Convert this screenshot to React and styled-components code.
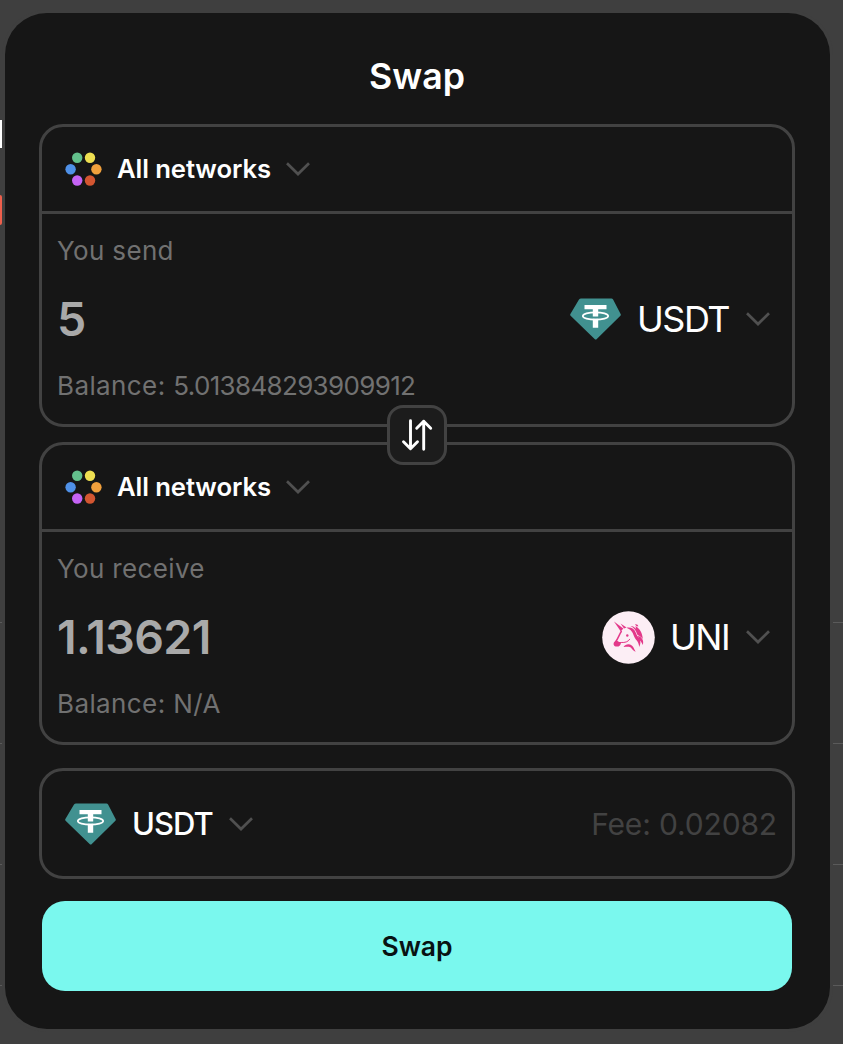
import React from "react";
import styled, { createGlobalStyle } from "styled-components";

const Global = createGlobalStyle`
  * { box-sizing: border-box; }
  body { margin: 0; background: #3f3f3f; }
`;

const Page = styled.div`
  position: relative;
  width: 843px;
  height: 1044px;
  padding: 13px 13px 15px 5px;
  overflow: hidden;
  background: #3f3f3f;
  font-family: Inter, "Liberation Sans", sans-serif;
`;

const Rule = styled.div`
  position: absolute;
  left: 0;
  right: 0;
  top: ${(p) => p.$top}px;
  height: 1px;
  background: #5a5a5a;
`;

const Peek = styled.div`
  position: absolute;
  left: 0;
  top: ${(p) => p.$top}px;
  width: 2px;
  height: ${(p) => p.$height}px;
  background: ${(p) => p.$color};
  border-radius: 0 ${(p) => p.$radius || 0}px ${(p) => p.$radius || 0}px 0;
`;

const Dialog = styled.main`
  position: relative;
  display: flex;
  flex-direction: column;
  width: 825px;
  height: 1016px;
  padding: 0 35px 0 34px;
  border-radius: 42px;
  background: #161616;
  box-shadow: 0 0 0 3px #3f3f3f;
`;

const Text = styled.span`
  display: block;
  white-space: nowrap;
  color: ${(p) => p.$color || "#fff"};
  font-size: ${(p) => p.$size}px;
  font-weight: ${(p) => p.$weight || 400};
  letter-spacing: ${(p) => p.$spacing || 0}px;
  line-height: ${(p) => p.$line}px;
`;

const BalanceValue = styled.span`
  letter-spacing: ${(p) => p.$spacing}px;
`;

const Header = styled.header`
  display: flex;
  justify-content: center;
  height: 111px;
  padding-top: 43px;
`;

const Panel = styled.section`
  height: 303px;
  border: 3px solid #424242;
  border-radius: 24px;
`;

const NetworkBar = styled.div`
  display: flex;
  align-items: center;
  height: 87px;
  padding-left: 23px;
  border-bottom: 3px solid #424242;
`;

const NetworkName = styled.div`
  width: 154px;
  margin: 0 15px;
`;

const PanelBody = styled.div`
  display: flex;
  flex-direction: column;
  padding: 20px 22px 0 15px;
`;

const AmountRow = styled.div`
  display: flex;
  align-items: center;
  justify-content: space-between;
  height: 70px;
  margin: 16px 0 15px;
`;

const Token = styled.div`
  display: flex;
  align-items: center;
`;

const TokenName = styled.div`
  width: ${(p) => p.$width}px;
  margin: 0 17px 0 ${(p) => p.$gap || 16}px;
`;

const Junction = styled.div`
  position: relative;
  display: flex;
  justify-content: center;
  height: 15px;
`;

const FlipButton = styled.button`
  position: absolute;
  top: -22px;
  display: flex;
  align-items: center;
  justify-content: center;
  width: 60px;
  height: 60px;
  padding: 0;
  border: 3px solid #424242;
  border-radius: 16px;
  background: #1c1c1c;
`;

const FeeRow = styled.section`
  display: flex;
  align-items: center;
  justify-content: space-between;
  height: 111px;
  margin-top: 23px;
  padding: 0 15px 0 23px;
  border: 3px solid #424242;
  border-radius: 24px;
`;

const SwapButton = styled.button`
  display: flex;
  align-items: center;
  justify-content: center;
  height: 90px;
  margin: 22px 3px 0;
  padding: 0;
  border: 0;
  border-radius: 23px;
  background: #7af8ee;
  font-family: inherit;
`;

const Icon = styled.svg`
  display: block;
  flex: none;
`;

function Chevron() {
  return (
    <Icon width="24" height="16" viewBox="0 0 24 16" fill="none">
      <path d="M1 2.300 12 13 23 2.300" stroke="#505050" strokeWidth="2.7" />
    </Icon>
  );
}

function NetworksIcon() {
  return (
    <Icon width="37" height="34" viewBox="0 0 37 34">
      <circle cx="12.2" cy="5.8" r="5.2" fill="#63c08c" />
      <circle cx="25" cy="5.8" r="5.2" fill="#eedf51" />
      <circle cx="31.4" cy="17.2" r="5.2" fill="#f1a03c" />
      <circle cx="25" cy="28.5" r="5.2" fill="#d35631" />
      <circle cx="12.2" cy="28.5" r="5.2" fill="#c563f5" />
      <circle cx="5.6" cy="17.2" r="5.2" fill="#4f91e8" />
    </Icon>
  );
}

function TetherIcon() {
  return (
    <Icon width="51" height="42" viewBox="0 0 51 42">
      <path d="M11 .5h30.500q1 0 1.600 .9L50.600 16q.6 1-.2 1.800L26.800 41q-1.100 1-2.200 0L.6 17.800q-.8-.8-.2-1.800L9 1.400Q9.800.5 11 .5Z" fill="#419190" />
      <path d="M14.500 7h22v4.200h-8.300v7.300h-5.400v-7.300h-8.300zM22.800 20.700h5.400v9h-5.400z" fill="#fff" />
      <ellipse cx="25.500" cy="18" rx="12.700" ry="3.700" fill="none" stroke="#fff" strokeWidth="1.700" />
    </Icon>
  );
}

function UniIcon() {
  return (
    <Icon width="53" height="53" viewBox="0 0 53 53">
      <circle cx="26.500" cy="26.500" r="26.300" fill="#fceef5" />
      <g fill="#e3398a">
        <path d="M12 10.500 21.300 17.500 18.800 20.500Z" />
        <path d="M18.500 12.500 24.500 16.500 22 17.500Z" />
        <path d="M12.200 31c1.400-1.600 3-1.500 4.500-.3.700.5 1.500.5 2.400.2 0 3-2 4.800-4.400 4.700-2.800-.1-3.900-2.400-2.500-4.600Z" />
        <path d="M24.500 16.800c4.500-.8 8 1 9.300 5 .8 2.500 2.400 4 3.600 6 1.400 2.400 1.300 5.200-.2 8.200-.3-4.500-2.200-6-4-8.500-1.500-2.200-1.700-5-3.700-7.300-1.300-1.500-2.900-2.600-5-3.400Z" />
        <path d="M28.500 15c2.500.2 4 1.200 5.500 2.700l-.5-2.700c4 2.300 7 7 7.300 13-1.700-2.200-3.500-3.200-5.600-4.500-1.200-4-3-6.500-6.700-8.500Z" />
        <path d="M33 13.300c1.800-.3 3 .3 3.300 2.100l-2-.4Z" />
        <path d="M36 24.500c4.500 2.300 6 5.200 4.800 9.500-1-2.500-2.400-4-4-5.700Z" />
        <path d="M21.500 36c2-3 5.500-3.700 8.300-1.600 2 1.500 2.300 3.600 3.900 6.400-2.500-.6-3.200-2.500-4.700-4-1.700-1.600-4-.8-7.500-.8Z" />
        <circle cx="25.300" cy="24.500" r="1.200" />
      </g>
      <g fill="none" stroke="#e3398a" strokeLinecap="round">
        <path d="M19.300 20.500c-1.800 2.500-3.200 7-5.500 10" strokeWidth="1.500" />
        <path d="M19.500 31.500c3.500.2 6.500-.5 8.200-3.200" strokeWidth="1" />
      </g>
    </Icon>
  );
}

function FlipIcon() {
  return (
    <Icon width="32" height="32" viewBox="0 0 32 32" fill="none">
      <path
        d="M9.500 1.800v28M2.500 22.800l7 7 7-7M22.700 30.200v-28M15.700 9.200l7-7 7 7"
        stroke="#fff"
        strokeWidth="2.900"
        strokeLinecap="round"
        strokeLinejoin="round"
      />
    </Icon>
  );
}

function AssetPanel({ label, amount, balance, token }) {
  return (
    <Panel>
      <NetworkBar>
        <NetworksIcon />
        <NetworkName>
          <Text $size={25.7} $weight={600} $line={36} $spacing={-0.1}>All networks</Text>
        </NetworkName>
        <Chevron />
      </NetworkBar>
      <PanelBody>
        <Text $size={26} $line={34} $color="#717171" $spacing={0.35}>{label}</Text>
        <AmountRow>
          <Text $size={46.5} $weight={600} $line={60} $color="#a9a9a9" $spacing={-0.6}>{amount}</Text>
          {token}
        </AmountRow>
        <Text $size={26} $line={34} $color="#717171" $spacing={0.4}>
          Balance: <BalanceValue $spacing={balance.spacing}>{balance.text}</BalanceValue>
        </Text>
      </PanelBody>
    </Panel>
  );
}

export default function App() {
  return (
    <>
      <Global />
      <Page>
        <Rule $top={622} />
        <Rule $top={743} />
        <Rule $top={864} />
        <Rule $top={985} />
        <Peek $top={120} $height={28} $color="#fff" />
        <Peek $top={195} $height={30} $color="#ee5f4c" $radius={2} />
        <Dialog>
          <Header>
            <Text $size={35.7} $weight={600} $line={40}>Swap</Text>
          </Header>
          <AssetPanel
            label="You send"
            amount="5"
            balance={{ text: "5.013848293909912", spacing: -0.66 }}
            token={
              <Token>
                <TetherIcon />
                <TokenName $width={92}><Text $size={36} $line={44} $spacing={-1.5}>USDT</Text></TokenName>
                <Chevron />
              </Token>
            }
          />
          <Junction>
            <FlipButton aria-label="Flip direction"><FlipIcon /></FlipButton>
          </Junction>
          <AssetPanel
            label="You receive"
            amount="1.13621"
            balance={{ text: "N/A", spacing: 0.4 }}
            token={
              <Token>
                <UniIcon />
                <TokenName $width={59} $gap={15}><Text $size={36} $line={44} $spacing={-1.5}>UNI</Text></TokenName>
                <Chevron />
              </Token>
            }
          />
          <FeeRow>
            <Token>
              <TetherIcon />
              <TokenName $width={80}><Text $size={31} $weight={500} $line={40} $spacing={-1}>USDT</Text></TokenName>
              <Chevron />
            </Token>
            <Text $size={30} $line={40} $color="#424242" $spacing={-0.15}>Fee: 0.02082</Text>
          </FeeRow>
          <SwapButton>
            <Text $size={26.5} $weight={600} $line={36} $color="#081212">Swap</Text>
          </SwapButton>
        </Dialog>
      </Page>
    </>
  );
}
